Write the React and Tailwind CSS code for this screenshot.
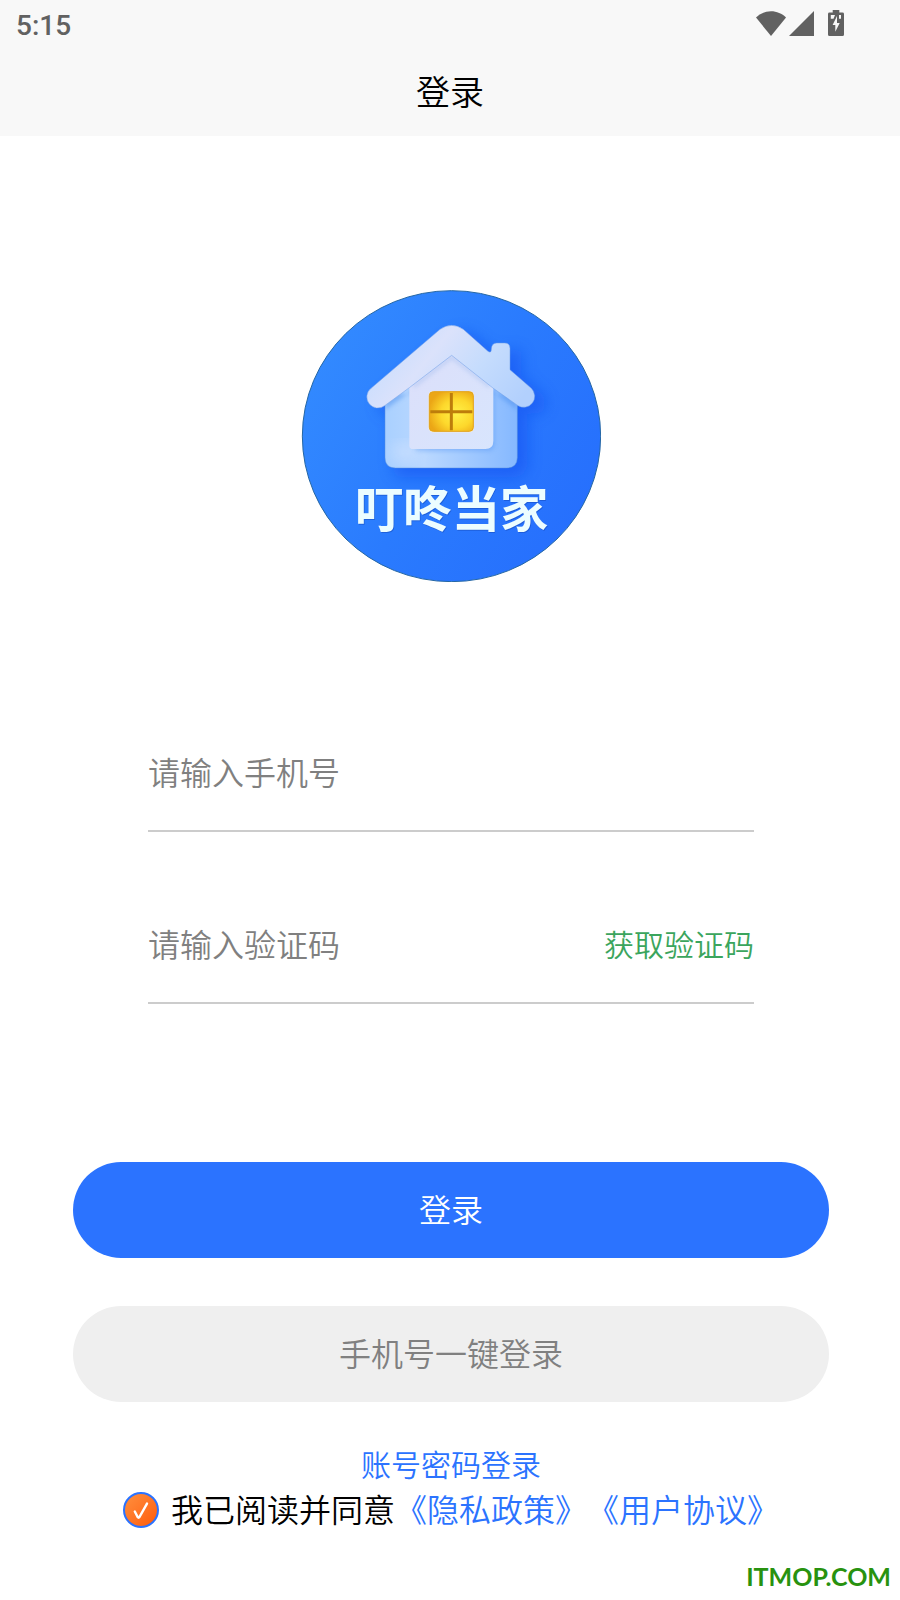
import React, { useState } from 'react';

const WifiIcon = () => (
    <svg width="30" height="25" viewBox="0 0 30 25" fill="#616161" aria-hidden="true">
        <path d="M0 6.500C4 2.600 9.300 0.300 15 0.300S26 2.600 30 6.500L15 25z" />
    </svg>
);

const SignalIcon = () => (
    <svg width="25" height="25" viewBox="0 0 25 25" fill="#616161" aria-hidden="true">
        <path d="M25 0v25H0z" />
    </svg>
);

const BatteryIcon = () => (
    <svg width="16" height="26" viewBox="0 0 16 26" aria-hidden="true">
        <path d="M4.700 0h6.600v2.600H14.500Q16 2.600 16 4v20.500Q16 26 14.500 26h-13Q0 26 0 24.500V4q0-1.400 1.500-1.400h3.200z" fill="#616161" />
        <path d="M2.800 5H7L5.500 8.800H2.800zM11 5h2v3.800h-2z" fill="#f8f8f8" />
        <path d="M9 6 4.600 15h2.700v6.800L11.700 13H9z" fill="#f8f8f8" />
    </svg>
);

const ROOF = 'M243 324 450 147Q485 123 520 147L594 213Q604 220 604 206Q605 188 620 188H644Q660 188 660 204V268L724 324A33 33 0 0 1 684 376L610 324 485 225 358 322 284 376A33 33 0 0 1 243 324Z';

const Logo = () => (
    <svg className="mx-auto block" width="300" height="292" viewBox="33 29 900 876" role="img" aria-label="叮咚当家">
        <defs>
            <linearGradient id="disc" x1="0" y1="0.2" x2="1" y2="0.8">
                <stop offset="0" stopColor="#338bff" />
                <stop offset="0.5" stopColor="#2a7bfe" />
                <stop offset="1" stopColor="#266efd" />
            </linearGradient>
            <linearGradient id="roof" x1="0" y1="0.3" x2="1" y2="0.7">
                <stop offset="0" stopColor="#c3dcff" />
                <stop offset="0.35" stopColor="#dbe2fb" />
                <stop offset="0.65" stopColor="#c5dcfd" />
                <stop offset="1" stopColor="#b2d0fd" />
            </linearGradient>
            <linearGradient id="wall" x1="0" y1="0" x2="1" y2="0">
                <stop offset="0" stopColor="#a9d0ff" />
                <stop offset="0.3" stopColor="#bad8ff" />
                <stop offset="1" stopColor="#85b8ff" />
            </linearGradient>
            <linearGradient id="front" x1="0" y1="0" x2="1" y2="1">
                <stop offset="0" stopColor="#dcdffa" />
                <stop offset="1" stopColor="#d8e5fd" />
            </linearGradient>
            <radialGradient id="glass" cx="0.62" cy="0.55" r="0.65">
                <stop offset="0" stopColor="#fff148" />
                <stop offset="0.55" stopColor="#fdd82c" />
                <stop offset="1" stopColor="#eba616" />
            </radialGradient>
            <filter id="soft" x="-30%" y="-30%" width="160%" height="160%">
                <feGaussianBlur stdDeviation="22" />
            </filter>
            <filter id="edge" x="-20%" y="-20%" width="140%" height="140%">
                <feGaussianBlur stdDeviation="7" />
            </filter>
            <clipPath id="wallClip">
                <path d="M285 320H682V531Q682 563 650 563H317Q285 563 285 531Z" />
            </clipPath>
        </defs>

        <ellipse cx="484.500" cy="467.500" rx="447.500" ry="436.500" fill="url(#disc)" stroke="#2466a4" strokeWidth="3" />

        {/* 房子阴影 */}
        <g fill="#0b45ec" opacity="0.45" filter="url(#soft)">
            <path d="M310 340H712V540Q712 590 670 590H340Q310 590 310 560Z" />
            <path d={ROOF} transform="translate(34 20)" />
        </g>

        {/* 墙体 */}
        <path d="M285 340 485 190 682 340V531Q682 563 650 563H317Q285 563 285 531Z" fill="url(#wall)" stroke="#568fdd" strokeWidth="1.500" />
        <g clipPath="url(#wallClip)">
            <path d="M285 388 360 335 485 240 610 335 682 390V340H285Z" fill="#4e91ee" opacity="0.5" filter="url(#edge)" />
            <path d="M370 330H614V490Q614 512 592 512H376Z" fill="#5f9df4" opacity="0.5" filter="url(#edge)" />
            <ellipse cx="345" cy="515" rx="44" ry="26" fill="#dbe7ff" opacity="0.5" filter="url(#soft)" />
        </g>
        <path d="M358 310 485 210 610 310V482Q610 506 586 506H370Q358 506 358 496Z" fill="url(#front)" />
        <path d="M370 318 485 230 600 318" fill="none" stroke="#9db9ec" strokeWidth="10" opacity="0.5" filter="url(#edge)" />

        {/* 屋顶和烟囱 */}
        <path d={ROOF} fill="url(#roof)" stroke="#6d9de6" strokeWidth="1.500" />

        {/* 窗户 */}
        <rect x="416" y="332" width="136" height="124" rx="14" fill="#fff3cf" />
        <rect x="418" y="334" width="132" height="119" rx="12" fill="url(#glass)" stroke="#dfa01c" strokeWidth="3" />
        <path d="M484 338V450M421 394H547" stroke="#bd7d0b" strokeWidth="9" />

        <g fontFamily="'Noto Sans CJK SC', sans-serif" fontWeight="700" fontSize="145">
            <text x="197" y="744" fill="#1448b8" opacity="0.5">叮咚当家</text>
            <text x="195" y="741" fill="#ecfdff">叮咚当家</text>
        </g>
    </svg>
);

const StatusBar = () => (
    <div className="flex h-12 items-center justify-between pr-14 pl-4">
        <span className="pt-1 font-[Roboto,sans-serif] text-[28px] leading-8 font-medium text-[#616161]">5:15</span>
        <div className="flex items-end pb-0.5">
            <WifiIcon />
            <span className="w-[3px]" />
            <SignalIcon />
            <span className="w-[14px]" />
            <BatteryIcon />
        </div>
    </div>
);

const inputClass = 'h-[116px] w-full min-w-0 flex-1 bg-transparent pb-0.5 text-[32px] text-black outline-none placeholder:text-[#808080] placeholder:opacity-100';

const App = () => {
    const [phone, setPhone] = useState('');
    const [code, setCode] = useState('');
    const [agreed, setAgreed] = useState(true);

    return (
        <div className="min-h-screen bg-white font-['Noto_Sans_CJK_SC',sans-serif] font-[350] text-black">
            <header className="bg-[#f8f8f8]">
                <StatusBar />
                <h1 className="pb-0.5 text-center text-[34px] leading-[86px] font-[350]">登录</h1>
            </header>

            <main className="pt-[154px] pr-[71px] pl-[73px]">
                <Logo />

                <form onSubmit={(e) => e.preventDefault()}>
                    <div className="mt-[132px] px-[75px]">
                        <div className="flex items-center border-b-2 border-[#cccccc]">
                            <input
                                type="tel"
                                aria-label="手机号"
                                placeholder="请输入手机号"
                                value={phone}
                                onChange={(e) => setPhone(e.target.value)}
                                className={inputClass}
                            />
                        </div>
                        <div className="mt-[54px] flex items-center border-b-2 border-[#cccccc]">
                            <input
                                type="text"
                                aria-label="验证码"
                                placeholder="请输入验证码"
                                value={code}
                                onChange={(e) => setCode(e.target.value)}
                                className={inputClass}
                            />
                            <button type="button" className="shrink-0 pb-0.5 text-[30px] text-[#3ba55d]">获取验证码</button>
                        </div>
                    </div>

                    <button type="submit" className="mt-[158px] block h-24 w-full rounded-full bg-[#2b73ff] pb-1 text-[32px] text-white">
                        登录
                    </button>
                    <button type="button" className="mt-12 block h-24 w-full rounded-full bg-[#efefef] pb-1 text-[32px] text-[#808080]">
                        手机号一键登录
                    </button>

                    <div className="mt-[39px] text-center text-[30px] leading-[44px]">
                        <a href="#password" className="text-[#2b73ff]">账号密码登录</a>
                    </div>

                    <div className="mt-px flex items-center pl-[50px] text-[32px] leading-[44px] whitespace-nowrap">
                        <span className="mr-3 grid size-9 shrink-0">
                            <input
                                id="agree"
                                type="checkbox"
                                checked={agreed}
                                onChange={(e) => setAgreed(e.target.checked)}
                                className="peer col-start-1 row-start-1 size-9 appearance-none rounded-full border-2 border-[#2b73ff] checked:bg-linear-to-br checked:from-[#ff8f3c] checked:to-[#ff5a00]"
                            />
                            <svg className="pointer-events-none invisible col-start-1 row-start-1 peer-checked:visible" width="36" height="36" viewBox="0 0 36 36" fill="none" stroke="#fff" strokeWidth="2.400" strokeLinecap="round" aria-hidden="true">
                                <path d="M11.800 19.500 14.800 25.300Q15.600 26.200 16.400 25L24 11.600" />
                            </svg>
                        </span>
                        <div className="flex pb-1">
                            <label htmlFor="agree">我已阅读并同意</label>
                            <a href="#privacy" className="text-[#2b73ff]">《隐私政策》</a>
                            <a href="#terms" className="text-[#2b73ff]">《用户协议》</a>
                        </div>
                    </div>
                </form>
            </main>

            <footer className="mt-[25px] pr-[9px] text-right font-[Lato,sans-serif] text-[25px] leading-[34px] font-bold text-[#28920f]">
                ITMOP.COM
            </footer>
        </div>
    );
};

export default App;
